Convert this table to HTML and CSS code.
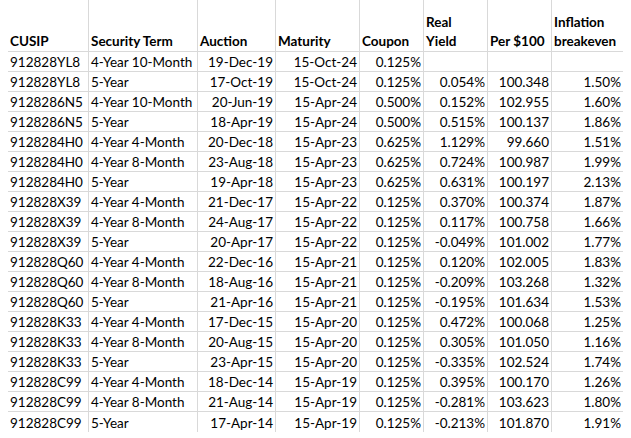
FILE: index.html
```html
<!DOCTYPE html>
<html>
<head>
<meta charset="utf-8">
<link rel="stylesheet" href="styles.css">
</head>
<body>
<table class="sheet">
<colgroup>
<col class="c1"><col class="c2"><col class="c3"><col class="c4"><col class="c5"><col class="c6"><col class="c7"><col class="c8">
</colgroup>
<thead>
<tr>
<th class="l">CUSIP</th><th class="l">Security Term</th><th class="l">Auction</th><th class="l">Maturity</th><th class="l">Coupon</th><th class="l">Real<br>Yield</th><th class="l">Per $100</th><th class="l">Inflation<br>breakeven</th>
</tr>
</thead>
<tbody>
<tr><td>912828YL8</td><td>4-Year 10-Month</td><td class="r">19-Dec-19</td><td class="r">15-Oct-24</td><td class="r">0.125%</td><td class="r"></td><td class="r"></td><td class="r"></td></tr>
<tr><td>912828YL8</td><td>5-Year</td><td class="r">17-Oct-19</td><td class="r">15-Oct-24</td><td class="r">0.125%</td><td class="r">0.054%</td><td class="r">100.348</td><td class="r">1.50%</td></tr>
<tr><td>9128286N5</td><td>4-Year 10-Month</td><td class="r">20-Jun-19</td><td class="r">15-Apr-24</td><td class="r">0.500%</td><td class="r">0.152%</td><td class="r">102.955</td><td class="r">1.60%</td></tr>
<tr><td>9128286N5</td><td>5-Year</td><td class="r">18-Apr-19</td><td class="r">15-Apr-24</td><td class="r">0.500%</td><td class="r">0.515%</td><td class="r">100.137</td><td class="r">1.86%</td></tr>
<tr><td>9128284H0</td><td>4-Year 4-Month</td><td class="r">20-Dec-18</td><td class="r">15-Apr-23</td><td class="r">0.625%</td><td class="r">1.129%</td><td class="r">99.660</td><td class="r">1.51%</td></tr>
<tr><td>9128284H0</td><td>4-Year 8-Month</td><td class="r">23-Aug-18</td><td class="r">15-Apr-23</td><td class="r">0.625%</td><td class="r">0.724%</td><td class="r">100.987</td><td class="r">1.99%</td></tr>
<tr><td>9128284H0</td><td>5-Year</td><td class="r">19-Apr-18</td><td class="r">15-Apr-23</td><td class="r">0.625%</td><td class="r">0.631%</td><td class="r">100.197</td><td class="r">2.13%</td></tr>
<tr><td>912828X39</td><td>4-Year 4-Month</td><td class="r">21-Dec-17</td><td class="r">15-Apr-22</td><td class="r">0.125%</td><td class="r">0.370%</td><td class="r">100.374</td><td class="r">1.87%</td></tr>
<tr><td>912828X39</td><td>4-Year 8-Month</td><td class="r">24-Aug-17</td><td class="r">15-Apr-22</td><td class="r">0.125%</td><td class="r">0.117%</td><td class="r">100.758</td><td class="r">1.66%</td></tr>
<tr><td>912828X39</td><td>5-Year</td><td class="r">20-Apr-17</td><td class="r">15-Apr-22</td><td class="r">0.125%</td><td class="r">-0.049%</td><td class="r">101.002</td><td class="r">1.77%</td></tr>
<tr><td>912828Q60</td><td>4-Year 4-Month</td><td class="r">22-Dec-16</td><td class="r">15-Apr-21</td><td class="r">0.125%</td><td class="r">0.120%</td><td class="r">102.005</td><td class="r">1.83%</td></tr>
<tr><td>912828Q60</td><td>4-Year 8-Month</td><td class="r">18-Aug-16</td><td class="r">15-Apr-21</td><td class="r">0.125%</td><td class="r">-0.209%</td><td class="r">103.268</td><td class="r">1.32%</td></tr>
<tr><td>912828Q60</td><td>5-Year</td><td class="r">21-Apr-16</td><td class="r">15-Apr-21</td><td class="r">0.125%</td><td class="r">-0.195%</td><td class="r">101.634</td><td class="r">1.53%</td></tr>
<tr><td>912828K33</td><td>4-Year 4-Month</td><td class="r">17-Dec-15</td><td class="r">15-Apr-20</td><td class="r">0.125%</td><td class="r">0.472%</td><td class="r">100.068</td><td class="r">1.25%</td></tr>
<tr><td>912828K33</td><td>4-Year 8-Month</td><td class="r">20-Aug-15</td><td class="r">15-Apr-20</td><td class="r">0.125%</td><td class="r">0.305%</td><td class="r">101.050</td><td class="r">1.16%</td></tr>
<tr><td>912828K33</td><td>5-Year</td><td class="r">23-Apr-15</td><td class="r">15-Apr-20</td><td class="r">0.125%</td><td class="r">-0.335%</td><td class="r">102.524</td><td class="r">1.74%</td></tr>
<tr><td>912828C99</td><td>4-Year 4-Month</td><td class="r">18-Dec-14</td><td class="r">15-Apr-19</td><td class="r">0.125%</td><td class="r">0.395%</td><td class="r">100.170</td><td class="r">1.26%</td></tr>
<tr><td>912828C99</td><td>4-Year 8-Month</td><td class="r">21-Aug-14</td><td class="r">15-Apr-19</td><td class="r">0.125%</td><td class="r">-0.281%</td><td class="r">103.623</td><td class="r">1.80%</td></tr>
<tr><td>912828C99</td><td>5-Year</td><td class="r">17-Apr-14</td><td class="r">15-Apr-19</td><td class="r">0.125%</td><td class="r">-0.213%</td><td class="r">101.870</td><td class="r">1.91%</td></tr>
</tbody>
</table>
</body>
</html>
```

FILE: styles.css
```css
html, body {
  margin: 0;
  padding: 0;
  background: #ffffff;
}

.sheet {
  margin-left: 8px;
  border-collapse: separate;
  border-spacing: 0;
  table-layout: fixed;
  width: 615px;
  font-family: Lato, "Liberation Sans", sans-serif;
  font-size: 13.5px;
  color: #000000;
}

.c1 { width: 81px; }
.c2 { width: 109px; }
.c3 { width: 78px; }
.c4 { width: 84px; }
.c5 { width: 64px; }
.c6 { width: 64px; }
.c7 { width: 64px; }
.c8 { width: 71px; }

.sheet th,
.sheet td {
  box-sizing: border-box;
  border-right: 1px solid #d9d9d9;
  border-bottom: 1px solid #d9d9d9;
  padding: 0 2px 1px 2px;
  vertical-align: bottom;
  white-space: nowrap;
  overflow: hidden;
}

.sheet th:last-child,
.sheet td:last-child {
  border-right: none;
}

.sheet tbody tr:last-child td {
  border-bottom: none;
}

.sheet th {
  height: 52px;
  font-weight: 700;
  line-height: 19px;
  padding-bottom: 0;
}

.sheet td {
  height: 20px;
  line-height: 16px;
  font-weight: 400;
}

.l { text-align: left; }
.r { text-align: right; }
```
